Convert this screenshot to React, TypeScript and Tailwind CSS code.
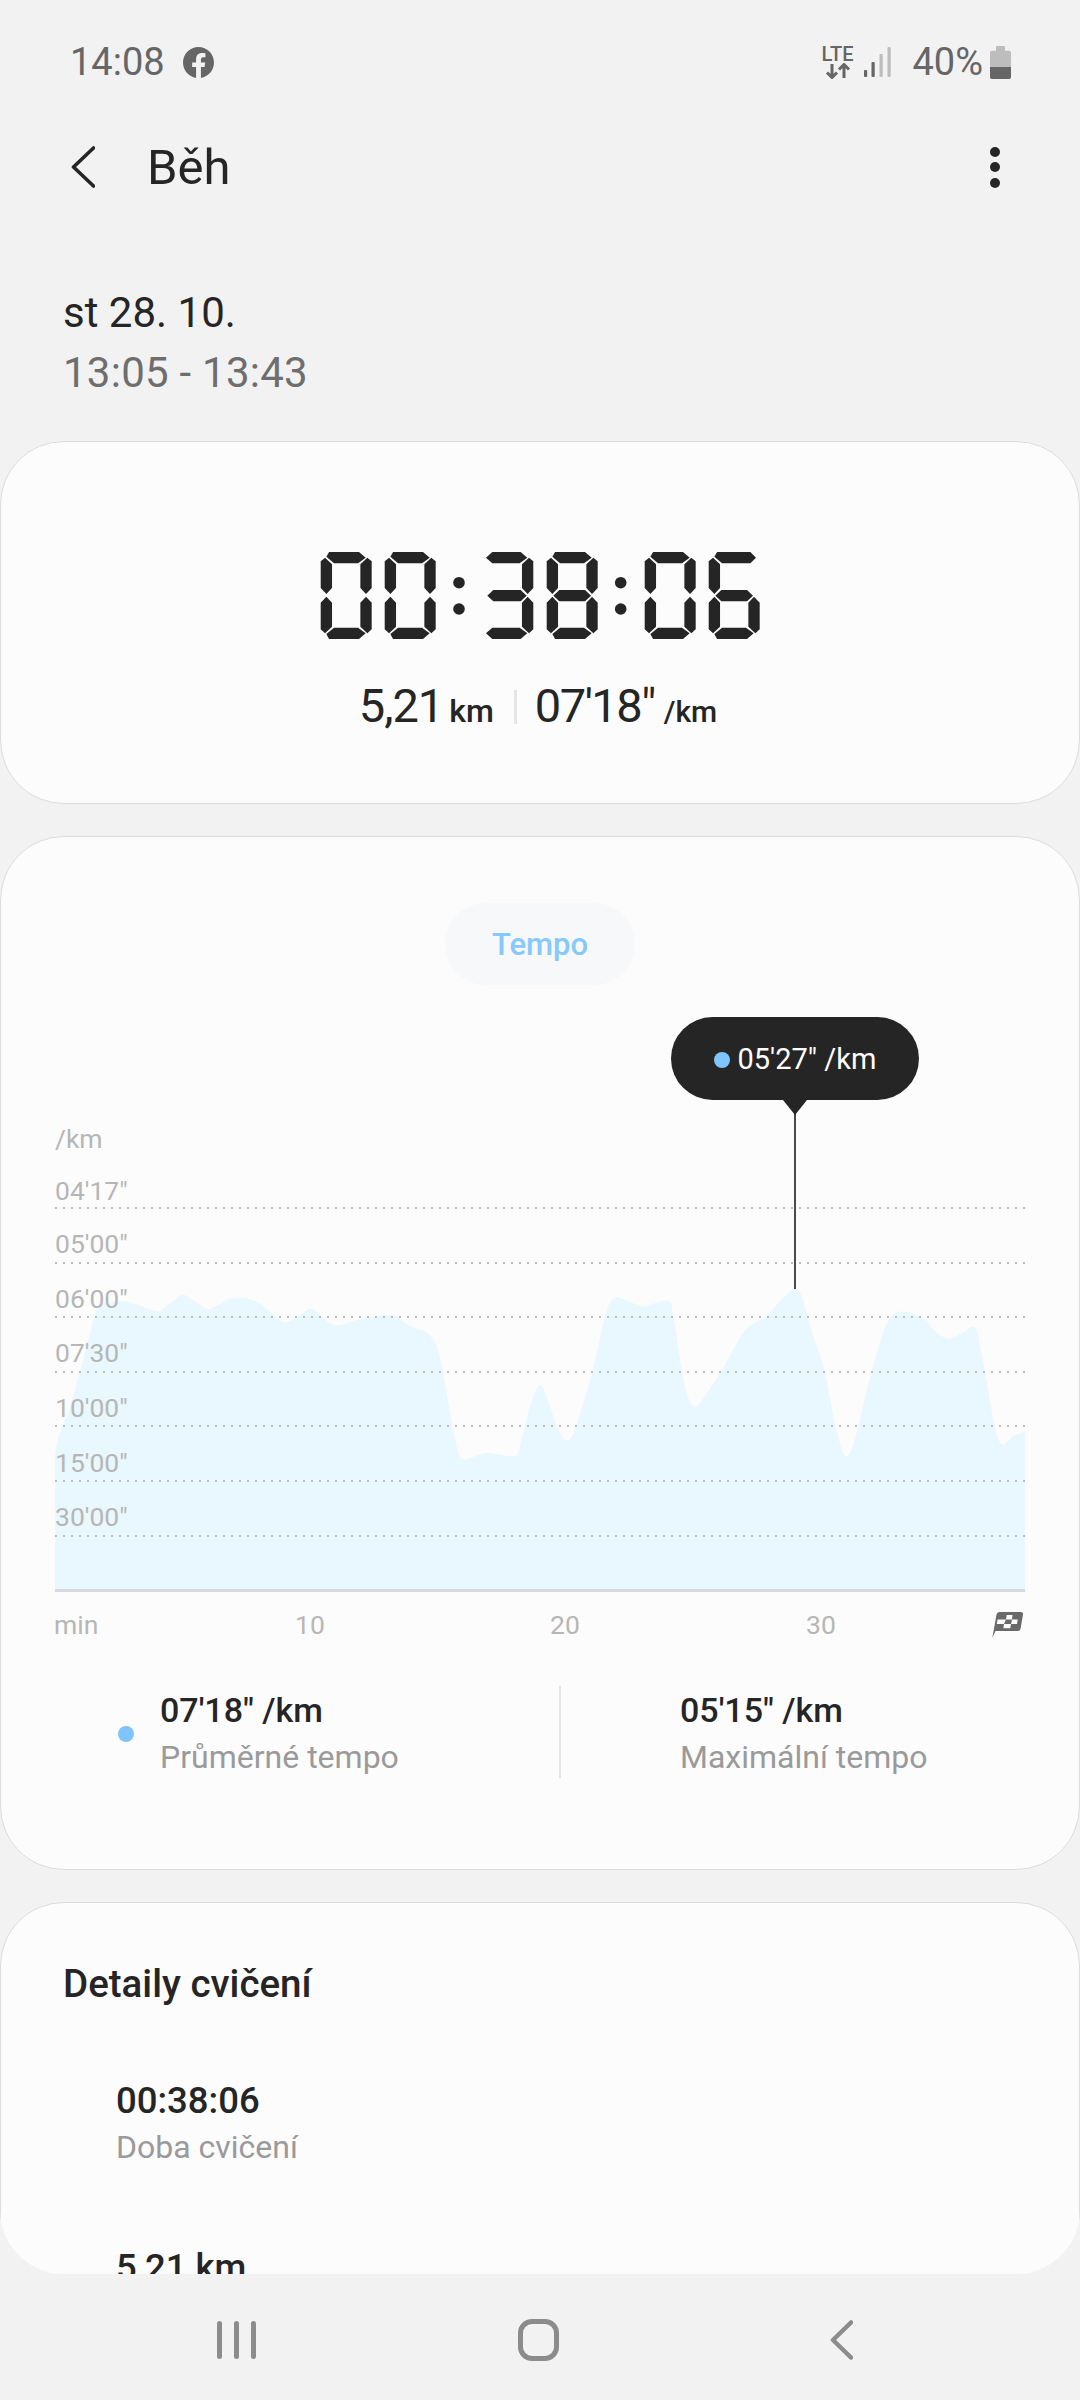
const zoomA: [number, number][] = [[155,1110],[165,1070],[200,985],[240,860],[265,775],[285,745],[340,738],[380,745],[440,763],[470,748],[510,723],[540,735],[580,757],[610,748],[650,730],[700,733],[730,745],[770,775],[800,790],[830,778],[870,757],[900,775],[935,797],[980,790],[1030,778],[1100,773],[1150,800],[1200,818],[1230,870],[1250,960],[1275,1080],[1297,1125],[1360,1110],[1440,1117],[1460,1085]];
const zoomB: [number, number][] = [[0,1095],[30,990],[57,943],[80,985],[105,1050],[128,1078],[150,1060],[200,920],[240,770],[265,730],[300,737],[345,750],[415,737],[430,780],[460,940],[485,995],[510,980],[570,900],[630,810],[690,775],[730,735],[770,708],[790,730],[820,820],[850,900],[885,1050],[912,1117],[940,1070],[985,910],[1040,775],[1120,775],[1160,810],[1200,830],[1240,815],[1275,803],[1295,880],[1340,1077],[1380,1068],[1414,1057]];
const pts: [number, number][] = [
  ...zoomA.map(([x, y]): [number, number] => [x / 2.8, 1000 + y / 2.45]),
  ...zoomB.map(([x, y]): [number, number] => [520 + x / 2.8, 1000 + y / 2.45]),
];
function smooth(p: [number, number][]) {
  let d = `M${p[0][0]} ${p[0][1]}`;
  for (let i = 0; i < p.length - 1; i++) {
    const a = p[Math.max(i - 1, 0)], b = p[i], c = p[i + 1], e = p[Math.min(i + 2, p.length - 1)];
    d += `C${(b[0] + (c[0] - a[0]) / 6).toFixed(1)} ${(b[1] + (c[1] - a[1]) / 6).toFixed(1)} ${(c[0] - (e[0] - b[0]) / 6).toFixed(1)} ${(c[1] - (e[1] - b[1]) / 6).toFixed(1)} ${c[0].toFixed(1)} ${c[1].toFixed(1)}`;
  }
  return d;
}
const areaPath = smooth(pts) + "L1025 1590L55 1590Z";

const gridLines = [
  [1208, 1200, `04'17"`],
  [1263, 1253, `05'00"`],
  [1317, 1308, `06'00"`],
  [1372, 1362, `07'30"`],
  [1426, 1417, `10'00"`],
  [1481, 1472, `15'00"`],
  [1536, 1526, `30'00"`],
] as const;

const SEG: Record<string, string> = {
  a: "25,0 115,0 135,17 112,34 40,34 17,14",
  a3: "30,0 115,0 135,17 112,34 30,34 11,17",
  a6: "25,0 125,0 142,17 125,34 40,34 17,14",
  f: "0,28 13,17 34,37 34,108 17,126 0,108",
  b: "153,28 140,17 119,37 119,108 136,126 153,108",
  e: "0,152 17,134 34,152 34,224 13,244 0,232",
  c: "153,152 136,134 119,152 119,224 140,244 153,232",
  d: "40,227 112,227 135,244 115,261 25,261 17,246",
  d3: "30,227 112,227 135,244 115,261 30,261 11,244",
  g: "20,131 38,114 115,114 133,131 115,148 38,148",
  g3: "15,131 33,114 115,114 133,131 115,148 33,148",
};
const DIGIT: Record<string, string[]> = {
  "0": ["a", "f", "b", "e", "c", "d"],
  "3": ["a3", "b", "g3", "c", "d3"],
  "8": ["a", "f", "b", "g", "e", "c", "d"],
  "6": ["a6", "f", "g", "e", "c", "d"],
};

function Clock() {
  const digits: [string, number][] = [["0", 320.7], ["0", 384.7], ["3", 482.3], ["8", 546.7], ["0", 644.7], ["6", 708.7]];
  return (
    <svg viewBox="320 552 440 87" className="mx-auto block h-[87px] w-[440px]" fill="#252525">
      {digits.map(([d, x], i) => (
        <g key={i} transform={`translate(${x} 552) scale(0.3333)`}>
          {DIGIT[d].map((s) => <polygon key={s} points={SEG[s]} />)}
        </g>
      ))}
      {[459, 620.7].map((x) => (
        <g key={x}>
          <circle cx={x} cy={582.7} r={5.8} />
          <circle cx={x} cy={609} r={5.8} />
        </g>
      ))}
    </svg>
  );
}

function Chart() {
  return (
    <div className="relative h-[650px] w-full">
      <svg viewBox="0 1010 1080 650" className="absolute inset-0 h-[650px] w-[1080px]">
        <path d={areaPath} fill="#e9f7fe" />
        <rect x="55" y="1589" width="970" height="3" fill="#d6d9e0" />
        {gridLines.map(([y]) => (
          <line key={y} x1="55" x2="1025" y1={y} y2={y} stroke="#bcbcbc" strokeWidth="2" strokeDasharray="2 6" />
        ))}
        <g fill="#b6b6b6" fontSize="26.5" fontFamily="Roboto, sans-serif">
          <text x="55" y="1148">/km</text>
          {gridLines.map(([y, b, t]) => (
            <text key={y} x="55" y={b}>{t}</text>
          ))}
          <text x="54" y="1634">min</text>
          <text x="310" y="1634" textAnchor="middle">10</text>
          <text x="565" y="1634" textAnchor="middle">20</text>
          <text x="821" y="1634" textAnchor="middle">30</text>
        </g>
        <line x1="795" x2="795" y1="1110" y2="1289" stroke="#4a4a4a" strokeWidth="2" />
        <path d="M992.3 1638 L996.5 1614.5 Q997 1612 999.5 1612 L1021 1612 Q1023.5 1612 1023 1614.5 L1020.5 1629 Q1020 1631 1018 1631 L995.5 1631 Z" fill="#6a6a6a" />
        <path d="M1006.7 1615H1012.5L1012 1619.5H1017.7L1017 1624H1011L1010.3 1628.3H1003.4L1004 1624H996.8L997.6 1619.5H1006Z" fill="#fcfcfc" />
        <path d="M1006 1619.5H1012L1011 1624H1004Z" fill="#6a6a6a" />
      </svg>
      <div className="absolute left-[671px] top-[7px] flex h-[83px] w-[248px] items-center rounded-[42px] bg-[#252525] pl-[43px] pt-[2px] text-[29px] text-white">
        <span className="mr-[8px] h-4 w-4 rounded-full bg-[#7fc4fd]" />
        <span className="mt-[1px]">05'27" /km</span>
      </div>
      <div className="absolute left-[783px] top-[90px] h-0 w-0 border-x-[12px] border-t-[15px] border-x-transparent border-t-[#252525]" />
    </div>
  );
}

function Legend({ value, label, dot }: { value: string; label: string; dot?: boolean }) {
  return (
    <div className="flex items-center">
      {dot && <span className="mr-[26px] h-4 w-4 rounded-full bg-[#7fc4fd]" />}
      <div>
        <div className="text-[34px] font-medium leading-[47px] text-[#252525]">{value}</div>
        <div className="text-[32px] leading-[47px] text-[#9a9a9a]">{label}</div>
      </div>
    </div>
  );
}

export default function App() {
  return (
    <div className="flex h-[2400px] w-[1080px] flex-col overflow-hidden bg-[#f2f2f2] font-['Roboto',sans-serif]">
      {/* status bar */}
      <div className="flex h-[122px] items-center pl-[70px] pr-[69px] pt-[2px] text-[38px] text-[#666666]">
        <span>14:08</span>
        <svg viewBox="0 0 24 24" className="ml-[18px] h-[31px] w-[31px]" fill="#666666">
          <path d="M24 12.07C24 5.4 18.63 0 12 0S0 5.4 0 12.07c0 6.03 4.39 11.02 10.13 11.93v-8.44H7.08v-3.49h3.05V9.41c0-3.02 1.79-4.69 4.53-4.69 1.31 0 2.69.24 2.69.24v2.97h-1.52c-1.49 0-1.96.93-1.96 1.89v2.25h3.33l-.53 3.49h-2.8V24C19.61 23.09 24 18.1 24 12.07z" />
        </svg>
        <div className="ml-auto flex items-center">
          <div className="flex flex-col items-center">
            <span className="text-[20px] font-medium leading-[17px]">LTE</span>
            <svg viewBox="0 0 30 16" className="h-4 w-[30px]" fill="none" stroke="#666666" strokeWidth="3">
              <path d="M9 1V14M4 9.5l5 5 5-5M21 15V2M16 6.5l5-5 5 5" />
            </svg>
          </div>
          <svg viewBox="0 0 27 30" className="ml-[11px] h-[30px] w-[27px]">
            <rect x="0" y="23" width="3.2" height="7" rx="1" fill="#666666" />
            <rect x="7.5" y="15" width="3.2" height="15" rx="1" fill="#666666" />
            <rect x="15.5" y="7" width="3.2" height="23" rx="1" fill="#bdbdbd" />
            <rect x="23.5" y="0" width="3.2" height="30" rx="1" fill="#bdbdbd" />
          </svg>
          <span className="ml-[21px]">40%</span>
          <svg viewBox="0 0 21 33" className="ml-[7px] h-[33px] w-[21px]">
            <rect x="6" y="0" width="9" height="6" rx="1" fill="#bdbdbd" />
            <rect x="0" y="4.7" width="21" height="28" rx="2" fill="#bdbdbd" />
            <path d="M0 21H21V31a2 2 0 0 1-2 2H2a2 2 0 0 1-2-2Z" fill="#666666" />
          </svg>
        </div>
      </div>

      {/* app bar */}
      <div className="flex h-[90px] items-center pl-[71px] pr-[80px] text-[#252525]">
        <svg viewBox="0 0 24 42" className="h-[42px] w-[24px]" fill="none" stroke="#252525" strokeWidth="3.6" strokeLinecap="round" strokeLinejoin="round">
          <path d="M22.5 2 L2.5 21 L22.5 40" />
        </svg>
        <span className="ml-[52px] mt-[2px] text-[49px]">Běh</span>
        <div className="ml-auto flex flex-col gap-[5.5px]">
          <span className="h-[10px] w-[10px] rounded-full bg-[#252525]" />
          <span className="h-[10px] w-[10px] rounded-full bg-[#252525]" />
          <span className="h-[10px] w-[10px] rounded-full bg-[#252525]" />
        </div>
      </div>

      {/* date */}
      <div className="pb-[38px] pl-[63px] pt-[71px] text-[42px] leading-[60px]">
        <div className="text-[#252525]">st 28. 10.</div>
        <div className="tracking-[0.25px] text-[#6e6e6e]">13:05 - 13:43</div>
      </div>

      {/* scroll content */}
      <div className="h-[1833px] overflow-hidden rounded-b-[64px]">
        <section className="h-[363px] rounded-[64px] border-[1.5px] border-[#dcdcdc] bg-[#fcfcfc] pt-[110px]">
          <Clock />
          <div className="mt-[39px] flex items-baseline justify-center pr-[4px] text-[#252525]">
            <span className="text-[47px] leading-[56px] tracking-[-1px]">5,21</span>
            <span className="ml-[6px] text-[32px] font-medium">km</span>
            <span className="ml-[20px] mr-[18px] h-[34px] w-[3px] self-center bg-[#e5e5e5]" />
            <span className="text-[47px] leading-[56px] tracking-[-1.5px]">07'18"</span>
            <span className="ml-[9px] text-[30px] font-medium">/km</span>
          </div>
        </section>

        <section className="mt-[32px] h-[1034px] rounded-[64px] border-[1.5px] border-[#dcdcdc] bg-[#fcfcfc] pt-[66px]">
          <div className="mx-auto flex h-[82px] w-[190px] items-center justify-center rounded-full bg-[#f6f8f9] pt-[2px] text-[31px] font-medium text-[#86c9fa]">
            Tempo
          </div>
          <div className="-ml-[1.5px] mt-[25px]">
            <Chart />
          </div>
          <div className="relative mt-[26px] flex h-[92px] items-center pt-[3px]">
            <div className="w-[558px] pl-[117px]">
              <Legend dot value={`07'18" /km`} label="Průměrné tempo" />
            </div>
            <span className="-mt-[3px] h-[92px] w-[2px] bg-[#e5e5e5]" />
            <div className="pl-[119px]">
              <Legend value={`05'15" /km`} label="Maximální tempo" />
            </div>
          </div>
        </section>

        <section className="mt-[32px] h-[600px] rounded-[64px] border-[1.5px] border-[#dcdcdc] bg-[#fcfcfc] pl-[62px] pt-[56px]">
          <h2 className="text-[38.5px] font-medium leading-[50px] text-[#252525]">Detaily cvičení</h2>
          <div className="ml-[53px] mt-[68px]">
            <div className="text-[36.5px] font-medium leading-[47px] text-[#252525]">00:38:06</div>
            <div className="text-[32px] leading-[47px] text-[#9a9a9a]">Doba cvičení</div>
            <div className="mt-[73px] text-[36.5px] font-medium leading-[47px] text-[#252525]">5,21 km</div>
          </div>
        </section>
      </div>

      {/* nav bar */}
      <div className="relative flex h-[126px] items-center pt-[6px]">
        <div className="ml-[217px] flex gap-3">
          <span className="h-[38px] w-[5px] rounded-full bg-[#8c8c8c]" />
          <span className="h-[38px] w-[5px] rounded-full bg-[#8c8c8c]" />
          <span className="h-[38px] w-[5px] rounded-full bg-[#8c8c8c]" />
        </div>
        <span className="ml-[262px] h-[42px] w-[41px] rounded-[14px] border-[5px] border-[#8c8c8c]" />
        <svg viewBox="0 0 23 40" className="ml-[271px] h-[40px] w-[23px]" fill="none" stroke="#8c8c8c" strokeWidth="4.5" strokeLinecap="round" strokeLinejoin="round">
          <path d="M21 2.5 L3 20 L21 37.5" />
        </svg>
      </div>
    </div>
  );
}
